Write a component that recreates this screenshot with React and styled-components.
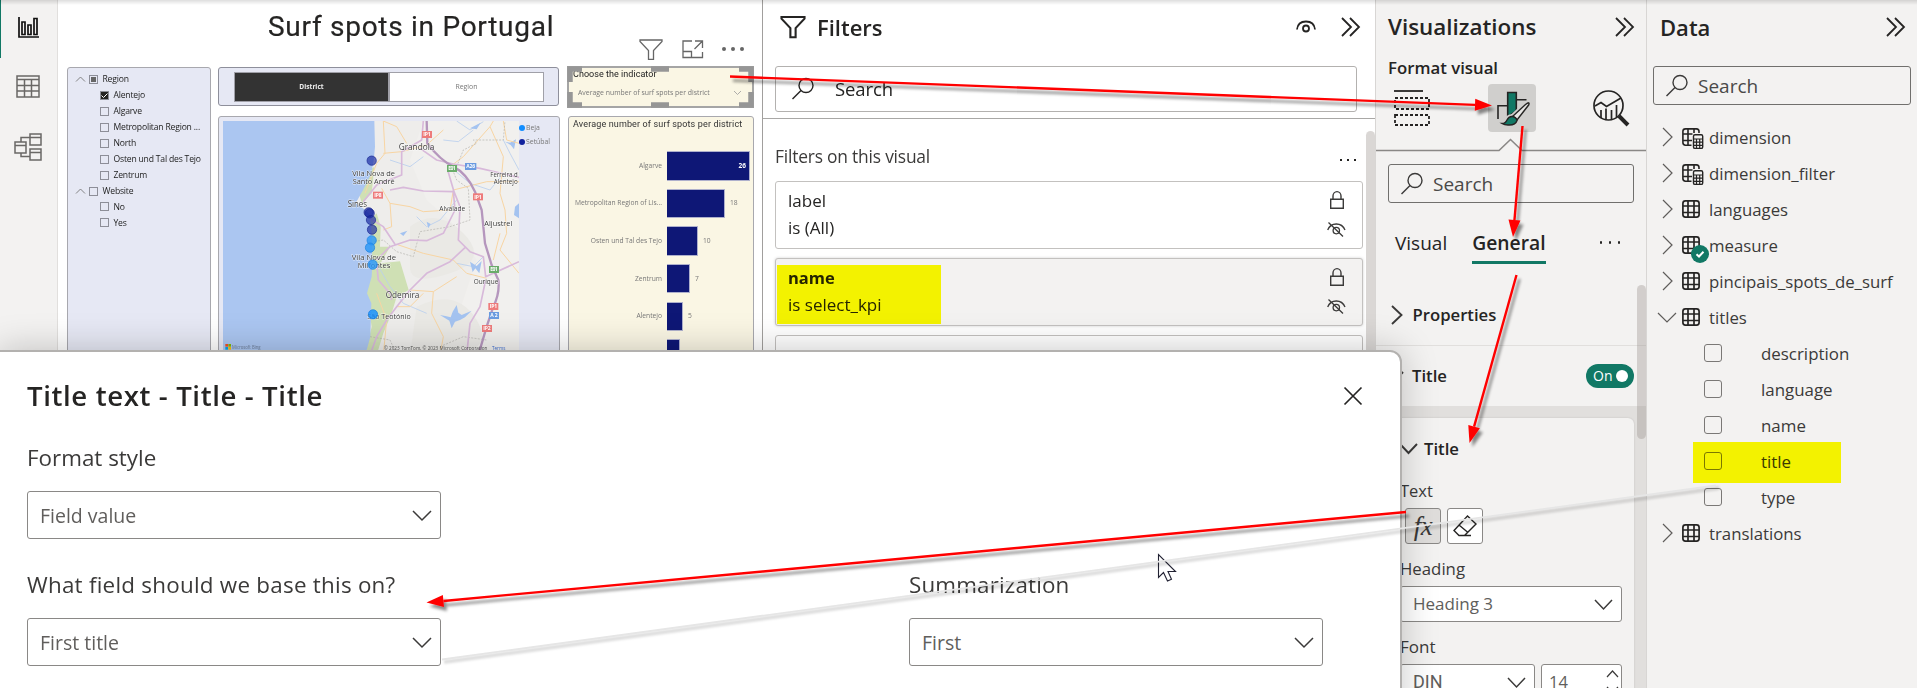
import React from "react";
import styled, { createGlobalStyle } from "styled-components";

const Global = createGlobalStyle`
  * { box-sizing: border-box; }
  body { margin: 0; background: #fff; overflow: hidden; }
`;

const ui = `"Open Sans", "Noto Sans", sans-serif`;
const din = `Roboto, "Liberation Sans", sans-serif`;

const Page = styled.div`
  position: relative;
  display: flex;
  width: 1917px;
  height: 688px;
  overflow: hidden;
  font-family: ${ui};
  color: #252423;
`;

const Text = styled.span`
  display: block;
  white-space: nowrap;
  font-family: ${(p) => (p.$din ? din : ui)};
  font-size: ${(p) => p.$size || 18}px;
  font-weight: ${(p) => p.$weight || 400};
  color: ${(p) => p.$color || "#252423"};
  letter-spacing: ${(p) => p.$track || 0}px;
  line-height: ${(p) => p.$line || 24}px;
`;

const Svg = styled.svg`
  display: block;
  flex: none;
  overflow: visible;
  fill: none;
  stroke: ${(p) => p.$color || "#252423"};
  stroke-width: ${(p) => p.$sw || 1.5};
`;

/* ---------- icons ---------- */
const Chevron = ({ dir = "down", w = 18, h = 9, sw = 1.5, color = "#3b3a39" }) => {
  const d = {
    down: `M0 0L${w / 2} ${h}L${w} 0`,
    up: `M0 ${h}L${w / 2} 0L${w} ${h}`,
    right: `M0 0L${w} ${h / 2}L0 ${h}`,
  }[dir];
  return <Svg width={w} height={h} $sw={sw} $color={color}><path d={d} /></Svg>;
};
const DoubleChevron = () => (
  <Svg width="19" height="18" $sw="1.8"><path d="M1 0L10 9L1 18M9 0L18 9L9 18" /></Svg>
);
const Funnel = ({ w = 24, h = 21, sw = 1.5, color }) => (
  <Svg width={w} height={h} viewBox="0 0 24 21" $sw={sw} $color={color}>
    <path d="M1 1H23V2.5L14.5 11.5V20.3H9.5V11.5L1 2.5Z" />
  </Svg>
);
const SearchIcon = ({ color = "#3b3a39" }) => (
  <Svg width="22" height="22" $sw="1.4" $color={color}>
    <circle cx="14" cy="7.5" r="7" /><path d="M9 12.5L0.5 21" />
  </Svg>
);
const Lock = () => (
  <Svg width="14" height="18" $sw="1.4" $color="#3b3a39">
    <path d="M0.7 8.2H13.3V17.3H0.7ZM3 8V5A4 4.4 0 0 1 11 5V8" />
  </Svg>
);
const EyeOff = () => (
  <Svg width="19" height="15" $sw="1.3" $color="#3b3a39">
    <path d="M0.7 8C2 4.6 5 2 9.3 2S16.6 4.6 18 8M1.5 0.5L16 14.5" /><circle cx="9.3" cy="8.6" r="3.2" />
  </Svg>
);
const Eye = () => (
  <Svg width="20" height="14" $sw="1.8">
    <path d="M1 9.5C1.5 4.5 5 1.5 10 1.5S18.500 4.500 19 9.500" /><circle cx="10" cy="8.500" r="3" />
  </Svg>
);
const TableIcon = () => (
  <Svg width="18" height="18" $sw="1.7">
    <rect x="0.9" y="0.9" width="16.200" height="16.200" rx="2.500" />
    <path d="M6 1V17M12 1V17M1 6H17M1 12.500H17" />
  </Svg>
);
const CalcTableIcon = () => (
  <Svg width="18" height="18" $sw="1.6">
    <path d="M9.500 17.200H3.500A2.600 2.600 0 0 1 .9 14.600V3.500A2.600 2.600 0 0 1 3.500 .9H14.500A2.600 2.600 0 0 1 17 3.500V5M6 1V17M12 1V5M1 6H10.500M1 12.500H10" />
    <rect x="11.500" y="6.800" width="9.200" height="13.600" rx="1.500" fill="#f3f2f1" strokeWidth="1.400" />
    <path d="M11.500 11H20.700M11.500 14.200H20.700M11.500 17.300H20.700M14.500 11V20.400M17.700 11V20.400" strokeWidth="1.200" />
  </Svg>
);

/* ---------- left rail ---------- */
const Rail = styled.nav`
  display: flex;
  flex-direction: column;
  width: 58px;
  background: #f3f2f1;
  border-right: 1px solid #e1dfdd;
`;
const RailItem = styled.div`
  display: flex;
  align-items: center;
  justify-content: center;
  height: ${(p) => p.$h || 58}px;
  padding-top: ${(p) => p.$top || 0}px;
  padding-bottom: ${(p) => p.$bottom || 0}px;
  border-left: 1px solid ${(p) => (p.$active ? "#117865" : "transparent")};
  padding-right: 2px;
`;

/* ---------- report canvas ---------- */
const Canvas = styled.main`
  width: 704px;
  height: 688px;
  display: flex;
  flex-direction: column;
  background: #fff;
`;
const ReportTitle = styled.h1`
  margin: 0;
  height: 38px;
  padding: 7px 0 0 210px;
  font: 400 28px/40px ${din};
  letter-spacing: 0.72px;
  white-space: nowrap;
  -webkit-text-stroke: 0.2px #252423;
`;
const VisualTools = styled.div`
  display: flex;
  align-items: center;
  gap: 19px;
  height: 28px;
  padding: 0 0 6px 581px;
`;
const Board = styled.div`
  display: flex;
  align-items: flex-start;
  padding-left: 9px;
`;
const Card = styled.section`
  background: ${(p) => p.$bg || "#e6e8f4"};
  border: 1px solid ${(p) => p.$edge || "#a8a8ae"};
  border-radius: ${(p) => p.$r || 3}px;
  width: ${(p) => p.$w}px;
  height: ${(p) => p.$h}px;
  margin-top: ${(p) => p.$mt || 0}px;
  padding: ${(p) => p.$pad || 0};
  flex: none;
`;
const Column = styled.div`
  display: flex;
  flex-direction: column;
  margin-left: ${(p) => p.$ml}px;
`;
const SlicerRow = styled.div`
  display: flex;
  align-items: center;
  height: 15.95px;
  padding-left: ${(p) => (p.$child ? 24 : 0)}px;
`;
const Tick = styled.span`
  display: grid;
  place-items: center;
  width: 9px;
  height: 9px;
  margin: 0 4.5px 0 ${(p) => (p.$group ? 4 : 0)}px;
  border: 1px solid #8d8e98;
  background: ${(p) => (p.$on ? "#252423" : "transparent")};
`;
const PartMark = styled.i`
  width: 5px;
  height: 5px;
  background: #666;
`;
const Segments = styled.div`
  display: flex;
  height: 30px;
`;
const Segment = styled.div`
  flex: 1;
  display: grid;
  place-items: center;
  background: ${(p) => (p.$on ? "#333" : "#fff")};
  border: 1px solid #a0a0a8;
`;
const MapBody = styled.div`
  display: flex;
`;
const Legend = styled.div`
  display: flex;
  flex-direction: column;
`;
const LegendItem = styled.div`
  display: flex;
  align-items: center;
  gap: 1px;
  height: 14px;
  &::before {
    content: "";
    width: 6px;
    height: 6px;
    border-radius: 50%;
    background: ${(p) => p.$dot};
  }
`;
const Selection = styled.section`
  position: relative;
  width: 187px;
  height: 42px;
  margin-left: -1px;
  padding: 1px 4px 0 4px;
  background: #faf6e4;
  border: 2px solid #a5a5a5;
`;
const SelectionHandles = styled(Svg)`
  position: absolute;
  left: -2px;
  top: -2px;
`;
const TinySelect = styled.div`
  display: flex;
  align-items: center;
  justify-content: space-between;
  height: 16px;
  margin-top: 5px;
  padding: 0 7px 0 5px;
`;
const Bars = styled.div`
  padding-top: 17px;
`;
const BarRow = styled.div`
  display: flex;
  align-items: center;
  height: 37.65px;
`;
const BarLabel = styled(Text)`
  width: 89px;
  text-align: right;
  margin-right: 5px;
`;
const BarValue = styled(Text)`
  margin-left: 5px;
`;
const Bar = styled.div`
  height: 29.500px;
  border: 1px solid #aeb0cc;
  border-left: 0;
  background: #0e1776;
  display: flex;
  align-items: center;
  justify-content: flex-end;
  padding-right: 3px;
`;

/* ---------- side panes ---------- */
const Pane = styled.aside`
  position: relative;
  display: flex;
  flex-direction: column;
  flex: none;
  width: ${(p) => p.$w}px;
  height: 688px;
  background: ${(p) => p.$bg || "#f3f2f1"};
  border-left: 1px solid ${(p) => p.$edge || "#d8d6d4"};
  & > * {
    flex-shrink: 0;
  }
`;
const PaneHead = styled.header`
  display: flex;
  align-items: center;
  height: ${(p) => p.$h || 54}px;
  padding: ${(p) => p.$pad};
`;
const Push = styled.span`
  flex: 1;
`;
const SearchBox = styled.div`
  display: flex;
  align-items: center;
  height: ${(p) => p.$h || 39}px;
  margin: ${(p) => p.$m};
  padding-left: ${(p) => p.$pl || 12}px;
  padding-top: ${(p) => p.$pt || 0}px;
  gap: ${(p) => p.$gap || 10}px;
  border: 1px solid ${(p) => p.$edge || "#706f6d"};
  border-radius: 3px;
`;
const FilterBody = styled.div`
  border-top: 1px solid #a9a8a6;
  margin-top: 6px;
  height: 570px;
  padding: 25px 12px 0 12px;
`;
const FilterHead = styled.div`
  display: flex;
  align-items: center;
  justify-content: space-between;
  height: 37px;
  padding-right: 7px;
  padding-bottom: 14px;
`;
const FilterCard = styled.div`
  position: relative;
  display: flex;
  justify-content: space-between;
  height: 68px;
  margin-bottom: 9px;
  padding: 5px 16px 0 12px;
  background: ${(p) => (p.$active ? "#f3f2f1" : "#fff")};
  border: 1px solid #c3c1bf;
  border-radius: 3px;
  box-shadow: ${(p) => (p.$active ? "0 0 3px rgba(0,0,0,.18)" : "none")};
`;
const FilterIcons = styled.div`
  display: flex;
  flex-direction: column;
  align-items: center;
  gap: 13px;
  padding-top: 4px;
`;
const Marker = styled.div`
  position: absolute;
  left: ${(p) => p.$x}px;
  top: ${(p) => p.$y}px;
  width: ${(p) => p.$w}px;
  height: ${(p) => p.$h}px;
  background: #ffff00;
  mix-blend-mode: multiply;
`;
const Scroll = styled.div`
  position: absolute;
  right: 0;
  top: ${(p) => p.$y}px;
  width: 9px;
  height: ${(p) => p.$h}px;
  border-radius: 5px;
  background: rgba(150, 140, 134, 0.35);
`;
const Dots = styled.div`
  display: flex;
  gap: ${(p) => p.$gap || 4}px;
  margin-top: ${(p) => p.$mt || 0}px;
  & i {
    width: ${(p) => p.$d || 2}px;
    height: ${(p) => p.$d || 2}px;
    border-radius: ${(p) => (p.$d > 2 ? "50%" : 0)};
    background: ${(p) => p.$c || "#252423"};
  }
`;
const More = (props) => <Dots {...props}><i /><i /><i /></Dots>;

const HeadActions = styled.div`
  display: flex;
  align-items: center;
  gap: 25px;
`;
const PaneSubtitle = styled(Text)`
  padding-left: 12px;
  margin-bottom: 2px;
`;
const VizTypes = styled.div`
  display: flex;
  align-items: center;
  justify-content: space-between;
  height: 48px;
  padding: 0 17px 0 18px;
`;
const VizActive = styled.div`
  display: grid;
  place-items: center;
  width: 48px;
  height: 48px;
  border-radius: 4px;
  background: #d0cfcd;
`;
const Tabs = styled.div`
  display: flex;
  align-items: flex-start;
  height: 50px;
  margin-top: 27px;
  padding: 0 26px 0 19px;
`;
const Tab = styled.div`
  height: 34px;
  margin-right: 25px;
  border-bottom: 3px solid ${(p) => (p.$on ? "#117865" : "transparent")};
`;
const Section = styled.div`
  display: flex;
  align-items: center;
  height: ${(p) => p.$h}px;
  padding: ${(p) => p.$pad};
  gap: ${(p) => p.$gap || 0}px;
  border-bottom: ${(p) => (p.$line ? "1px solid #e1dfdd" : "0")};
`;
const Toggle = styled.div`
  display: flex;
  align-items: center;
  justify-content: space-between;
  width: 48px;
  height: 24px;
  padding: 0 6px 0 7px;
  border-radius: 12px;
  background: #117865;
  &::after {
    content: "";
    width: 12px;
    height: 12px;
    border-radius: 50%;
    background: #fff;
  }
`;
const Group = styled.div`
  height: 282px;
  padding: 12px 12px 0 12px;
  background: #e1dfdd;
`;
const GroupCard = styled.div`
  height: 280px;
  padding: 21px 12px 0 12px;
  border-radius: 6px;
  background: #f3f2f1;
  box-shadow: 0 0 2px rgba(0, 0, 0, 0.15);
`;
const Inline = styled.div`
  display: flex;
  gap: ${(p) => p.$gap}px;
  align-items: center;
  height: ${(p) => (p.$h ? p.$h + "px" : "auto")};
  padding-left: ${(p) => p.$pl || 0}px;
`;
const FieldLabel = styled(Text)`
  margin: ${(p) => p.$mt || 13}px 0 5px;
`;
const IconButton = styled.div`
  display: grid;
  place-items: center;
  width: 36px;
  height: 36px;
  border: 1px solid #8a8886;
  border-radius: 3px;
  background: ${(p) => (p.$on ? "#dfdddb" : "#fff")};
`;
const Fx = styled.span`
  font: italic 27px/30px "Liberation Serif", serif;
  letter-spacing: -0.5px;
  color: #3b3a39;
`;
const Select = styled.div`
  display: flex;
  align-items: center;
  justify-content: space-between;
  width: ${(p) => p.$w}px;
  height: ${(p) => p.$h || 36}px;
  padding: 0 ${(p) => p.$pr || 9}px 0 ${(p) => p.$pl || 12}px;
  border: 1px solid #8a8886;
  border-radius: 3px;
  background: #fff;
`;
const Spinner = styled.div`
  display: flex;
  flex-direction: column;
  gap: 10px;
`;

const Tree = styled.div`
  padding-top: 14px;
`;
const TreeRow = styled.div`
  display: flex;
  align-items: center;
  height: 36px;
  padding-left: 15px;
`;
const TreeArrow = styled.span`
  display: flex;
  justify-content: center;
  width: 10px;
  margin-right: 10px;
`;
const TreeIcon = styled.span`
  position: relative;
  width: 18px;
  margin-right: 9px;
`;
const TreeName = styled(Text)`
  padding-top: 1px;
`;
const Verified = styled(Svg)`
  position: absolute;
  left: 9px;
  top: 9px;
`;
const Check = styled.span`
  width: 18px;
  height: 18px;
  margin: 0 39px 0 42px;
  border: 1px solid #7a7876;
  border-radius: 3px;
`;

/* ---------- dialog ---------- */
const Dialog = styled.div`
  position: absolute;
  left: -2px;
  top: 350px;
  width: 1404px;
  height: 400px;
  padding: 22px 0 0 27px;
  background: #fff;
  border: 2px solid #b3b1af;
  border-top-right-radius: 12px;
  box-shadow: 0 0 36px rgba(0, 0, 0, 0.22);
`;
const DialogHead = styled.div`
  display: flex;
  align-items: center;
  justify-content: space-between;
  height: 44px;
  padding-right: 38px;
`;
const DialogTitle = styled(Text)`
  padding-bottom: 3px;
`;
const Fields = styled.div`
  display: flex;
  margin-top: ${(p) => p.$mt}px;
`;
const Field = styled.div`
  flex: none;
  width: ${(p) => p.$w || 882}px;
`;
const Overlay = styled.svg`
  position: absolute;
  left: 0;
  top: 0;
  pointer-events: none;
`;
const TopShade = styled.div`
  position: absolute;
  left: 0;
  top: 0;
  width: 100%;
  height: 5px;
  background: linear-gradient(rgba(0, 0, 0, 0.13), rgba(0, 0, 0, 0));
`;

/* ---------- map ---------- */
const MapSvg = styled.svg`
  display: block;
  flex: none;
`;
const Shield = ({ x, y, c = "#ee7b7b", children, w = 30 }) => (
  <g>
    <rect x={x - w / 2} y={y - 10} width={w} height="21" fill={c} />
    <text x={x} y={y + 6} fontSize="15" fontWeight="700" fill="#fff" textAnchor="middle" textLength={w - 8}>{children}</text>
  </g>
);
const towns = [
  ["Grandola", 566, 270, 25, 107], ["Vila Nova de", 427, 347, 23, 128], ["Santo André", 428, 371, 23, 126],
  ["Sines", 413, 442, 25, 58], ["Alvalade", 688, 454, 20, 78], ["Aljustrel", 823, 498, 23, 84],
  ["Ferreira d", 841, 351, 20, 82], ["Alentejo", 851, 373, 20, 72], ["Vila Nova de", 425, 600, 23, 133],
  ["Milfontes", 443, 625, 23, 98], ["Odemira", 527, 713, 25, 101], ["São Teotónio", 472, 776, 23, 130], ["Ourique", 791, 672, 20, 74],
];
const spots = [
  [485, 302, 0], [476, 457, 0], [479, 460, 0], [483, 480, 0], [486, 509, 0],
  [485, 541, 1], [480, 563, 1], [488, 614, 1], [489, 763, 2],
];
const MapView = () => (
  <MapSvg width="296" height="234" viewBox="39 183 888 702">
    <rect x="39" y="183" width="888" height="702" fill="#eeedeb" />
    <path d="M640 183L927 183V885H780L740 780L800 600L740 500L650 420L600 300Z" fill="#f1f0ee" />
    <path d="M600 500Q680 440 760 520T720 640 600 620ZM620 740Q740 680 800 780T700 885H600Z" fill="#eae9e5" />
    <path d="M493 320L485 400 455 430 447 400 480 330ZM500 460L512 500 510 560 540 560 512 610 570 604 596 690 560 710 545 760 520 820 500 885H465L485 800 470 700 486 600 480 480Z" fill="#cfe0b4" />
    <path d="M39 183H493L495 260Q493 300 484 340L462 385 437 430 462 447 478 462 484 500 486 560 487 610 485 650 471 700 484 730 481 830 466 885H39Z" fill="#abc6f1" />
    <g fill="none" stroke="#b9cfee" strokeWidth="2.500">
      <path d="M927 330L900 280 880 240M740 183L780 210 820 185M700 240L745 245 790 210M620 470L650 500 690 480 740 420M540 300L600 320 640 290M500 610L540 680 580 730 650 760M820 590L790 620 740 610M720 320L780 370 840 390 880 340" />
    </g>
    <path d="M690 765L706 768 722 772 728 755 740 735 745 758 755 765 785 752 765 772 750 780 735 785 725 805 718 782ZM780 605L800 618 815 603 808 640 796 625 788 636ZM885 245L900 248 918 238 912 268 902 255ZM915 440L927 430V475L912 465ZM650 485L662 492 655 505ZM570 520L592 512 580 528ZM780 205L812 188 800 208Z" fill="#a4c3f0" />
    <g fill="none" stroke="#f8d5a3" strokeWidth="3">
      <path d="M520 183L525 280 500 310 465 400M520 280L575 275 650 255 700 210M520 183L560 200 590 250M515 385L540 430 600 440 640 455 720 450 730 390 830 365 927 365M540 430L545 500 520 510M560 553L640 580 730 600 770 640 830 655M720 320L760 290 840 200 850 183M840 200L880 290 870 400 885 450 890 520 870 570 927 640M500 700L530 780 520 885M600 690L670 695 740 650M670 695L665 760 700 830 690 885M640 700L600 740 560 740M880 183L890 240 927 250M870 520L850 600" />
    </g>
    <g fill="none" stroke="#b4b2ae" strokeWidth="2" strokeDasharray="6 4">
      <path d="M740 320L760 270 800 250 790 240H880L885 183M720 310L740 360 775 385 780 480 720 500 630 515 610 590 560 575 520 540 490 545M690 860L760 830 830 840M480 830L540 840 560 885" />
    </g>
    <g fill="none" stroke="#d8b9da" strokeWidth="5">
      <path d="M640 183L635 240 575 275 575 345 500 375 460 425M540 390L580 382 640 393 730 395 735 450 700 520 650 542 600 540 540 560 500 600M480 475L520 500 555 553M630 265L680 300 730 312 810 325 927 352M713 330L732 395 750 440 745 540 780 575 820 590 827 650 927 605M765 563L720 605 650 640 600 690 560 740 530 780 500 830 480 885M827 660L810 740 780 790 770 885M500 610L505 660 540 700 545 720" strokeLinejoin="round" />
    </g>
    <path d="M650 183L652 250Q690 300 730 320T795 395L815 450 825 550 845 615 865 660Q870 700 850 740L830 800 805 885" fill="none" stroke="#b596bd" strokeWidth="7" />
    <Shield x={651} y={223}>IP1</Shield><Shield x={504} y={405}>IP8</Shield>
    <Shield x={726} y={325} c="#6aac6a">E01</Shield><Shield x={782} y={319} c="#6a9be0" w={34}>A26</Shield>
    <Shield x={804} y={410}>IP1</Shield><Shield x={852} y={628} c="#6aac6a">E01</Shield>
    <Shield x={850} y={739}>IP1</Shield><Shield x={852} y={766} c="#6a9be0">A2</Shield><Shield x={831} y={805}>IP2</Shield>
    <g fontFamily={ui} fill="#3a3a3a" stroke="#fff" strokeWidth="3" paintOrder="stroke" strokeOpacity=".7">
      {towns.map(([t, x, y, s, w]) => <text key={t + y} x={x} y={y} fontSize={s} textLength={w} lengthAdjust="spacingAndGlyphs">{t}</text>)}
    </g>
    {spots.map(([x, y, k]) => (
      <circle key={x + "-" + y} cx={x} cy={y} r="14" fill={["#12239e", "#2a97f7", "#118dff"][k]} fillOpacity={k === 0 ? 0.65 : 0.82}
        stroke={k === 0 ? "#1a2590" : "#1b80e0"} strokeWidth="2.500" strokeOpacity=".8" />
    ))}
    <g>
      <rect x="46" y="852" width="8" height="8" fill="#f25022" /><rect x="55" y="852" width="8" height="8" fill="#7fba00" />
      <rect x="46" y="861" width="8" height="8" fill="#00a4ef" /><rect x="55" y="861" width="8" height="8" fill="#ffb900" />
      <g fontFamily={ui} fontSize="15.500">
        <text x="66" y="867" fill="#6d7d99" textLength="86" lengthAdjust="spacingAndGlyphs">Microsoft Bing</text>
        <text x="522" y="869" fill="#555" textLength="310" lengthAdjust="spacingAndGlyphs">© 2023 TomTom, © 2023 Microsoft Corporation</text>
        <text x="846" y="869" fill="#3f6fd0" textLength="40" lengthAdjust="spacingAndGlyphs" textDecoration="underline">Terms</text>
      </g>
    </g>
  </MapSvg>
);

const Arrow = ({ from, to, len = 17, half = 6 }) => {
  const [x1, y1] = from, [x2, y2] = to;
  const L = Math.hypot(x2 - x1, y2 - y1), ux = (x2 - x1) / L, uy = (y2 - y1) / L;
  const bx = x2 - ux * len, by = y2 - uy * len;
  return (
    <g filter="url(#drop)">
      <path d={`M${x1} ${y1}L${bx} ${by}`} stroke="#f00" strokeWidth="2.400" />
      <path d={`M${x2} ${y2}L${bx - uy * half} ${by + ux * half}L${bx + uy * half} ${by - ux * half}Z`} fill="#f00" />
    </g>
  );
};

const regions = [
  ["Region", "part", true], ["Alentejo", "on"], ["Algarve"], ["Metropolitan Region ..."], ["North"],
  ["Osten und Tal des Tejo"], ["Zentrum"], ["Website", "", true], ["No"], ["Yes"],
];
const bars = [
  ["Algarve", 26, 83], ["Metropolitan Region of Lis...", 18, 58], ["Osten und Tal des Tejo", 10, 31],
  ["Zentrum", 7, 23], ["Alentejo", 5, 16], ["North", 4, 13],
];
const tables = [
  ["dimension", "calc"], ["dimension_filter", "calc"], ["languages"], ["measure", "ok"],
  ["pincipais_spots_de_surf"], ["titles", "open"],
];

const TableRow = ({ name, kind }) => (
  <TreeRow>
    <TreeArrow>{kind === "open" ? <Chevron color="#5f5d5b" sw={1.2} /> : <Chevron dir="right" w={9} h={18} sw={1.2} color="#5f5d5b" />}</TreeArrow>
    <TreeIcon>
      {kind === "calc" ? <CalcTableIcon /> : <TableIcon />}
      {kind === "ok" && (
        <Verified width="18" height="18" $color="none">
          <circle cx="9" cy="9" r="9" fill="#117865" />
          <path d="M5.500 9.200L8 11.500L12.500 6.800" stroke="#fff" strokeWidth="2" />
        </Verified>
      )}
    </TreeIcon>
    <TreeName $size={16.800} $color="#3b3a39">{name}</TreeName>
  </TreeRow>
);

export default function App() {
  return (
    <Page>
      <Global />
      <Rail>
        <RailItem $active $bottom={4}>
          <Svg width="21" height="21" $sw="1.700" $color="#111">
            <path d="M1 0V20H21M4 5H7V17.500H4ZM10 8H13V17.500H10ZM16 1.500H19V17.500H16Z" />
          </Svg>
        </RailItem>
        <RailItem $bottom={1}>
          <Svg width="24" height="23" $sw="1.500" $color="#6a6866">
            <path d="M1 1H23V22H1ZM1 4.500H23M1 10.500H23M1 16H23M8.500 4.500V22M15.500 4.500V22" />
          </Svg>
        </RailItem>
        <RailItem $h={62}>
          <Svg width="28" height="28" $sw="1.500" $color="#6a6866">
            <path d="M1 9H12V20H1ZM1 12.500H12M16 1H27V12H16ZM16 4.500H27M16 16H27V27H16ZM16 19.500H27M7 9V4.500H16M7 20V23.500H16" />
          </Svg>
        </RailItem>
      </Rail>

      <Canvas>
        <ReportTitle>Surf spots in Portugal</ReportTitle>
        <VisualTools>
          <Funnel color="#666" sw={1.300} />
          <Svg width="21" height="18" $sw="1.300" $color="#666">
            <path d="M10 1H1V17.500H20.500V12M13 1H20.500V8M20 1.500L12.500 9M1 11.500H9.500V17.500" />
          </Svg>
          <More $d={4} $gap={5} $c="#666" />
        </VisualTools>
        <Board>
          <Card $w={144} $h={400} $mt={1} $pad="3.500px 0 0 8px">
            {regions.map(([name, state, group]) => (
              <SlicerRow key={name} $child={!group}>
                {group && <Chevron dir="up" w={9} h={4.500} sw={0.900} color="#777" />}
                <Tick $group={group} $on={state === "on"}>
                  {state === "part" && <PartMark />}
                  {state === "on" && <Svg width="7" height="5" $sw="1" $color="#fff"><path d="M0.500 2.500L2.500 4.500L6.500 0.500" /></Svg>}
                </Tick>
                <Text $size={8.600} $line={14} $track={-0.190} $color="#222">{name}</Text>
              </SlicerRow>
            ))}
          </Card>
          <Column $ml={7}>
            <Card $w={341} $h={39} $mt={1} $pad="4px 14px 0 15px" $edge="#8e8f9b">
              <Segments>
                <Segment $on><Text $size={6.600} $line={12} $weight={700} $color="#eee">District</Text></Segment>
                <Segment><Text $size={6.900} $line={12} $color="#777">Region</Text></Segment>
              </Segments>
            </Card>
            <Card $w={342} $h={400} $mt={10} $pad="4px 0 0 4px">
              <MapBody>
                <MapView />
                <Legend>
                  <LegendItem $dot="#118dff"><Text $size={6.900} $line={12} $color="#777">Beja</Text></LegendItem>
                  <LegendItem $dot="#12239e"><Text $size={6.900} $line={12} $color="#777">Setúbal</Text></LegendItem>
                </Legend>
              </MapBody>
            </Card>
          </Column>
          <Column $ml={8}>
            <Selection>
              <Text $din $size={9} $line={11} $track={0.040} $color="#222">Choose the indicator</Text>
              <TinySelect>
                <Text $size={6.900} $line={12} $color="#777">Average number of surf spots per district</Text>
                <Chevron w={7} h={3.500} sw={0.800} color="#999" />
              </TinySelect>
              <SelectionHandles width="187" height="42" $sw="5.500" $color="#969696">
                <path d="M15 3H3V16M172 3H184V16M15 39H3V26M172 39H184V26M84 3H102M84 39H102" />
              </SelectionHandles>
            </Selection>
            <Card $w={186} $h={400} $mt={8} $bg="#faf6e4" $pad="1px 0 0 4px">
              <Text $din $size={9} $line={12} $track={0.140} $color="#333">Average number of surf spots per district</Text>
              <Bars>
                {bars.map(([name, value, w], i) => (
                  <BarRow key={name}>
                    <BarLabel $size={6.700} $line={12} $color="#777">{name}</BarLabel>
                    <Bar style={{ width: w }}>{i === 0 && <Text $size={6.500} $line={12} $weight={700} $color="#fff">{value}</Text>}</Bar>
                    {i > 0 && <BarValue $size={6.700} $line={12} $color="#777">{value}</BarValue>}
                  </BarRow>
                ))}
              </Bars>
            </Card>
          </Column>
        </Board>
      </Canvas>

      <Pane $w={613} $bg="#fff" $edge="#a19f9d">
        <PaneHead $pad="0 15px 0 17px">
          <Inline $gap={11}>
            <Funnel w={26} h={22} sw={2} />
            <Text $size={22} $weight={600} $line={32}>Filters</Text>
          </Inline>
          <Push />
          <HeadActions><Eye /><DoubleChevron /></HeadActions>
        </PaneHead>
        <SearchBox $h={46} $m="12px 18px 0 12px" $pl={16} $gap={21} $edge="#b3b1af">
          <SearchIcon color="#252423" /><Text $size={18.500} $line={22} $track={-0.100}>Search</Text>
        </SearchBox>
        <FilterBody>
          <FilterHead>
            <Text $size={17.400} $color="#3b3a39" $track={-0.200}>Filters on this visual</Text>
            <More $gap={5} $mt={9} />
          </FilterHead>
          <FilterCard>
            <div><Text $size={17} $line={27}>label</Text><Text $size={17} $line={27}>is (All)</Text></div>
            <FilterIcons><Lock /><EyeOff /></FilterIcons>
          </FilterCard>
          <FilterCard $active>
            <div><Text $size={16.500} $line={27} $weight={700}>name</Text><Text $size={17} $line={27}>is select_kpi</Text></div>
            <FilterIcons><Lock /><EyeOff /></FilterIcons>
            <Marker $x={1} $y={6} $w={164} $h={59} />
          </FilterCard>
          <FilterCard />
        </FilterBody>
        <Scroll $y={131} $h={560} />
      </Pane>

      <Pane $w={271}>
        <PaneHead $pad="0 12px 0 12px">
          <Text $size={22.400} $weight={600} $line={32}>Visualizations</Text><Push /><DoubleChevron />
        </PaneHead>
        <PaneSubtitle $size={16.800} $weight={600} $line={28}>Format visual</PaneSubtitle>
        <VizTypes>
          <Svg width="36" height="36" $sw="1.800">
            <path d="M0 1H29" /><path d="M1 8H35V19H1ZM1 25H35V35H1Z" strokeDasharray="3 2" />
          </Svg>
          <VizActive>
            <Svg width="34" height="36" $sw="1.600">
              <path d="M3 29V15.700H12M22 9.700H31.500" />
              <path d="M12.700 2.500H21.300V21L12.700 27Z" fill="#117865" />
              <path d="M17.500 26.500L30.500 14.500Q34.500 11.500 33.500 14.800L22 30ZM7 33.500Q10.500 33 12 30Q14 26 18 27" stroke="#d0cfcd" strokeWidth="5" />
              <path d="M17.500 26.500L30.500 14.500Q35 11 33.800 14.800L22 30Q20.500 27.200 17.500 26.500Z" fill="#e8e7e5" strokeWidth="1.400" />
              <path d="M7 33.500Q10.500 33.500 12 30Q14 26 17.500 26.500Q21.500 27.500 22 30.500Q20.500 35.500 13 35Q9.500 35 7 33.500Z" fill="#117865" strokeWidth="1.400" />
            </Svg>
          </VizActive>
          <Svg width="36" height="36" $sw="1.700">
            <circle cx="15.500" cy="15.500" r="14.500" />
            <path d="M2 16L8 12.500L13.500 16.500L28 8M8 20V28M13 18.500V29.500M18.500 20V29.500M23.500 15V27" />
            <path d="M26 26L35 35" strokeWidth="4" />
          </Svg>
        </VizTypes>
        <Svg width="270" height="20" $sw="1.600" $color="#8a8886">
          <path d="M0 18.500H123L134.500 7.500L146 18.500H270" />
        </Svg>
        <SearchBox $m="12px 12px 0 12px">
          <SearchIcon /><Text $size={19} $color="#4a4948">Search</Text>
        </SearchBox>
        <Tabs>
          <Tab><Text $size={19} $line={26}>Visual</Text></Tab>
          <Tab $on><Text $size={19.300} $line={26} $weight={600}>General</Text></Tab>
          <Push />
          <More $d={2.500} $gap={6.500} $mt={11} />
        </Tabs>
        <Section $h={66} $pad="4px 0 0 16px" $gap={11} $line>
          <Chevron dir="right" w={9.500} h={18} sw={1.900} />
          <Text $size={16.700} $weight={600}>Properties</Text>
        </Section>
        <Section $h={60} $pad="0 12px 0 10px" $gap={9}>
          <Chevron w={17} h={9} sw={1.900} />
          <Text $size={16.700} $weight={600}>Title</Text>
          <Push />
          <Toggle><Text $size={14} $line={20} $color="#fff">On</Text></Toggle>
        </Section>
        <Group>
          <GroupCard>
            <Inline $gap={7} $h={19}><Chevron w={17} h={9} sw={1.900} /><Text $size={16.700} $weight={600}>Title</Text></Inline>
            <FieldLabel $size={16.500} $mt={21} $color="#3b3a39">Text</FieldLabel>
            <Inline $gap={6} $pl={5}>
              <IconButton $on><Fx>fx</Fx></IconButton>
              <IconButton>
                <Svg width="24" height="22" $sw="1.400">
                  <path d="M14.500 1L23 9L11.500 20.500H6L1 15.500ZM6 10L15 17.500M6 20.500H18" />
                </Svg>
              </IconButton>
            </Inline>
            <FieldLabel $size={16.800} $color="#3b3a39">Heading</FieldLabel>
            <Select $w={222}><Text $size={17} $color="#605e5c">Heading 3</Text><Chevron w={17} h={9} /></Select>
            <FieldLabel $size={17} $color="#3b3a39">Font</FieldLabel>
            <Inline $gap={6}>
              <Select $w={135}><Text $din $size={18} $color="#605e5c">DIN</Text><Chevron w={17} h={9} /></Select>
              <Select $w={81} $pl={7} $pr={3}>
                <Text $size={16.500} $color="#605e5c">14</Text>
                <Spinner><Chevron dir="up" w={11} h={6} sw={1.200} /><Chevron w={11} h={6} sw={1.200} /></Spinner>
              </Select>
            </Inline>
          </GroupCard>
        </Group>
        <Scroll $y={285} $h={154} />
      </Pane>

      <Pane $w={271}>
        <PaneHead $pad="0 12px 0 13px">
          <Text $size={22} $weight={600} $line={32}>Data</Text><Push /><DoubleChevron />
        </PaneHead>
        <SearchBox $m="12px 6px 0 6px" $pt={1}>
          <SearchIcon /><Text $size={19} $color="#4a4948">Search</Text>
        </SearchBox>
        <Tree>
          {tables.map(([name, kind]) => <TableRow key={name} name={name} kind={kind} />)}
          {["description", "language", "name", "title", "type"].map((f) => (
            <TreeRow key={f}><Check /><TreeName $size={16.900} $color="#3b3a39">{f}</TreeName></TreeRow>
          ))}
          <TableRow name="translations" />
        </Tree>
        <Marker $x={46} $y={442} $w={148} $h={41} />
      </Pane>

      <TopShade />

      <Dialog>
        <DialogHead>
          <DialogTitle $size={27.600} $weight={600} $line={38} $track={0.620}>Title text - Title - Title</DialogTitle>
          <Svg width="18" height="18" $sw="1.700"><path d="M0.500 0.500L17.500 17.500M17.500 0.500L0.500 17.500" /></Svg>
        </DialogHead>
        <Fields $mt={25}><Text $size={22.400} $line={30} $color="#3b3a39">Format style</Text></Fields>
        <Fields $mt={18}>
          <Select $w={414} $h={48}><Text $size={19.500} $line={25} $color="#605e5c">Field value</Text><Chevron /></Select>
        </Fields>
        <Fields $mt={30}>
          <Field><Text $size={22.400} $line={32} $track={0.250} $color="#3b3a39">What field should we base this on?</Text></Field>
          <Field $w={414}><Text $size={22.400} $line={32} $track={0.150} $color="#3b3a39">Summarization</Text></Field>
        </Fields>
        <Fields $mt={17}>
          <Field><Select $w={414} $h={48}><Text $size={19.500} $line={25} $color="#605e5c">First title</Text><Chevron /></Select></Field>
          <Field $w={414}><Select $w={414} $h={48}><Text $size={19.500} $line={25} $color="#605e5c">First</Text><Chevron /></Select></Field>
        </Fields>
      </Dialog>

      <Overlay width="1917" height="688">
        <defs>
          <filter id="drop" filterUnits="userSpaceOnUse" x="0" y="0" width="1917" height="688">
            <feDropShadow dx="3" dy="4" stdDeviation="1.800" floodColor="#000" floodOpacity=".45" />
          </filter>
          <filter id="faint" filterUnits="userSpaceOnUse" x="0" y="0" width="1917" height="688">
            <feGaussianBlur stdDeviation="1" />
          </filter>
        </defs>
        <path d="M1158.500 554.500V577.500L1163.500 572.500L1167.500 581L1171.500 579.300L1168 571.500H1175.500Z" fill="#fff" stroke="#223" strokeWidth="1.100" />
        <path d="M444 662L1719 488" stroke="#000" strokeOpacity=".13" strokeWidth="4" filter="url(#faint)" />
        <path d="M442 659.500L1716 485.500" stroke="#e6e6e6" strokeWidth="1.800" />
        <Arrow from={[730, 76.500]} to={[1492, 105.500]} />
        <Arrow from={[1522.500, 126]} to={[1513, 237]} />
        <Arrow from={[1516.500, 275]} to={[1469.500, 443]} />
        <Arrow from={[1406, 512]} to={[426.500, 602.500]} />
      </Overlay>
    </Page>
  );
}
